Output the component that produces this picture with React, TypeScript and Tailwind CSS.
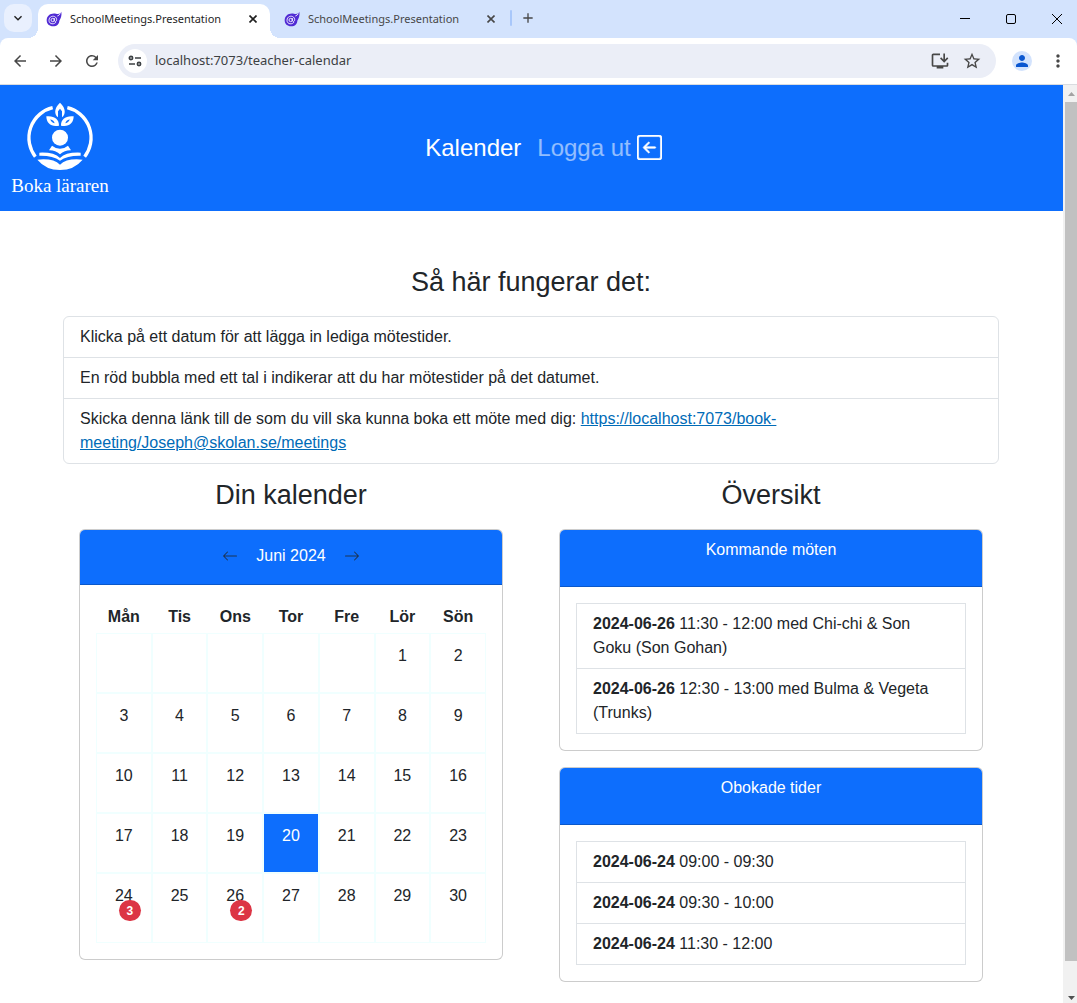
import React from "react";
import {
  MdArrowBack,
  MdArrowForward,
  MdRefresh,
  MdOutlineInstallDesktop,
  MdStarBorder,
  MdPerson,
  MdMoreVert,
  MdKeyboardArrowDown,
  MdAdd,
} from "react-icons/md";
import { BsArrowLeft, BsArrowRight, BsArrowLeftSquare } from "react-icons/bs";

const weekdays = ["Mån", "Tis", "Ons", "Tor", "Fre", "Lör", "Sön"];

const weeks: (number | null)[][] = [
  [null, null, null, null, null, 1, 2],
  [3, 4, 5, 6, 7, 8, 9],
  [10, 11, 12, 13, 14, 15, 16],
  [17, 18, 19, 20, 21, 22, 23],
  [24, 25, 26, 27, 28, 29, 30],
];

const today = 20;
const meetingCounts: Record<number, number> = { 24: 3, 26: 2 };

const upcoming = [
  { date: "2024-06-26", text: "11:30 - 12:00 med Chi-chi & Son Goku (Son Gohan)" },
  { date: "2024-06-26", text: "12:30 - 13:00 med Bulma & Vegeta (Trunks)" },
];

const unbooked = [
  { date: "2024-06-24", text: "09:00 - 09:30" },
  { date: "2024-06-24", text: "09:30 - 10:00" },
  { date: "2024-06-24", text: "11:30 - 12:00" },
];

function BlazorIcon() {
  return (
    <svg viewBox="0 0 48 48" className="mb-1 size-4 shrink-0" aria-hidden="true">
      <path
        d="M46 2C44 8 38 10 30 8C14 5 2 14 2 28C2 39 10 46 21 46C33 46 40 38 40 29C44 23 48 13 46 2Z"
        fill="#512bd4"
      />
      <path
        d="M30 33C26 41 9 41 9 28C9 12 32 12 32 26C32 33 25 33 25 28V21M25 27A5 5 0 1 1 15 27A5 5 0 1 1 25 27M34 15C38 14 41 11 43 8"
        fill="none"
        stroke="#fff"
        strokeWidth="2.6"
      />
    </svg>
  );
}

function SiteInfoIcon() {
  return (
    <svg viewBox="0 0 14 12" className="h-3 w-3.5" fill="none" stroke="#3c4043" strokeWidth="1.7" aria-hidden="true">
      <circle cx="3" cy="3" r="1.6" />
      <path d="M7 3H13M1 9H7" />
      <circle cx="11" cy="9" r="1.6" />
    </svg>
  );
}

function Tab({ active }: { active?: boolean }) {
  return (
    <div
      className={
        active
          ? "relative flex h-[34px] w-58 shrink items-center rounded-t-[10px] bg-white pr-2.5 pl-2 text-[#1f1f1f]"
          : "flex h-[34px] w-58 shrink items-center pr-1 pl-3.5 text-[#474747]"
      }
    >
      {active && (
        <>
          <span className="absolute bottom-0 -left-2.5 size-2.5 bg-[radial-gradient(circle_at_0_0,transparent_10px,white_10px)]" />
          <span className="absolute -right-2.5 bottom-0 size-2.5 bg-[radial-gradient(circle_at_100%_0,transparent_10px,white_10px)]" />
        </>
      )}
      <BlazorIcon />
      <span className="ml-2 flex-1 truncate pb-1 text-[11px] leading-4">SchoolMeetings.Presentation</span>
      <button type="button" aria-label="Stäng flik" className="mb-1 grid size-3.5 place-items-center">
        <svg viewBox="0 0 8 8" className="size-2" stroke="currentColor" strokeWidth="1.6" fill="none">
          <path d="M.5 .5L7.5 7.5M7.5 .5L.5 7.5" />
        </svg>
      </button>
    </div>
  );
}

function BrowserChrome() {
  return (
    <div className="font-['Noto_Sans','Open_Sans',sans-serif]">
      <div className="flex h-[38px] items-end bg-[#d3e3fd]">
        <button
          type="button"
          aria-label="Sök bland flikar"
          className="mb-1.5 ml-1 grid size-7 shrink-0 place-items-center rounded-[10px] bg-[#e9f0fe] text-[#1f1f1f]"
        >
          <MdKeyboardArrowDown className="size-4" stroke="currentColor" />
        </button>
        <div className="ml-1.5 flex min-w-0">
          <Tab active />
          <Tab />
        </div>
        <span className="mb-3 ml-2 h-4 w-0.5 rounded bg-[#a8c7fa]" />
        <button type="button" aria-label="Ny flik" className="mb-3 ml-2 text-[#474747]">
          <MdAdd className="size-4" />
        </button>
        <div className="ml-auto flex h-full text-black">
          <button type="button" aria-label="Minimera" className="grid w-11.5 place-items-center">
            <svg viewBox="0 0 10 10" className="size-2.5" stroke="currentColor" fill="none"><path d="M0 4.5H10" /></svg>
          </button>
          <button type="button" aria-label="Maximera" className="grid w-11.5 place-items-center">
            <svg viewBox="0 0 10 10" className="size-2.5" stroke="currentColor" fill="none">
              <rect x=".5" y=".5" width="9" height="9" rx="1.5" />
            </svg>
          </button>
          <button type="button" aria-label="Stäng" className="grid w-[43px] place-items-center pl-[3px]">
            <svg viewBox="0 0 10 10" className="size-2.5" stroke="currentColor" fill="none"><path d="M0 0L10 10M10 0L0 10" /></svg>
          </button>
        </div>
      </div>
      <div className="bg-[#d3e3fd]">
        <div className="flex h-[47px] items-center rounded-t-lg border-b border-[#d9dce0] bg-white pl-[11px] text-[#474747]">
          <button type="button" aria-label="Tillbaka" className="mr-4.5"><MdArrowBack className="size-[18px]" /></button>
          <button type="button" aria-label="Framåt" className="mr-4.5"><MdArrowForward className="size-[18px]" /></button>
          <button type="button" aria-label="Läs in igen" className="mr-[17px]"><MdRefresh className="size-[18px]" /></button>
          <div className="flex h-[34px] flex-1 items-center rounded-full bg-[#ebeef7] pr-3.5 pl-[5px]">
            <button
              type="button"
              aria-label="Visa webbplatsinformation"
              className="grid size-6 place-items-center rounded-full bg-white"
            >
              <SiteInfoIcon />
            </button>
            <input
              type="text"
              aria-label="Adress"
              readOnly
              value="localhost:7073/teacher-calendar"
              className="ml-2 min-w-0 flex-1 bg-transparent text-[13px] text-[#3c4043] outline-none"
            />
            <button type="button" aria-label="Installera" className="mr-3"><MdOutlineInstallDesktop className="size-5" /></button>
            <button type="button" aria-label="Bokmärk"><MdStarBorder className="size-5" /></button>
          </div>
          <button
            type="button"
            aria-label="Profil"
            className="ml-4 grid size-5 place-items-center rounded-full bg-[#d3e3fd] text-[#0b57d0]"
          >
            <MdPerson className="size-[18px]" />
          </button>
          <button type="button" aria-label="Meny" className="mr-[9px] ml-4"><MdMoreVert className="size-5" /></button>
        </div>
      </div>
    </div>
  );
}

function Logo() {
  return (
    <a href="#hem" className="flex w-30 shrink-0 flex-col items-center text-white">
      <svg viewBox="75 33 210 213" className="mb-0.5 h-[71px] w-[70px]" fill="#fff" aria-hidden="true">
        <path
          d="M158 53A93 93 0 0 0 106 200M202 53A93 93 0 0 1 254 200"
          fill="none"
          stroke="#fff"
          strokeWidth="10"
        />
        <path d="M180 38C199 55 197 74 186 82V64L180 56L174 64V82C163 74 161 55 180 38Z" />
        <path
          fillRule="evenodd"
          d="M139 79C162 76 178 88 177 107C154 112 139 100 139 79ZM151 88Q153 97 164 100Q162 91 151 88Z"
        />
        <path
          fillRule="evenodd"
          d="M221 79C198 76 182 88 183 107C206 112 221 100 221 79ZM209 88Q207 97 196 100Q198 91 209 88Z"
        />
        <circle cx="180" cy="143" r="24" />
        <path d="M156 167Q180 186 204 167L213 181Q195 180 180 193Q165 180 147 181Z" />
        <path d="M118 188Q162 186 180 204Q198 186 242 188V197Q202 196 180 212Q158 196 118 197Z" />
        <path d="M112 209Q160 204 180 224Q200 204 248 209Q222 240 180 240Q138 240 112 209Z" />
      </svg>
      <span className="font-['Liberation_Serif',serif] text-[19px] leading-6">Boka läraren</span>
    </a>
  );
}

function Calendar() {
  return (
    <section className="overflow-hidden rounded-md border border-black/20 bg-white">
      <div className="flex h-[55px] items-center justify-center gap-4.5 border-b border-black/20 bg-[#0d6efd] pb-0.5 text-white">
        <button type="button" aria-label="Föregående månad" className="text-[#212529]/80">
          <BsArrowLeft className="size-4" />
        </button>
        <span>Juni 2024</span>
        <button type="button" aria-label="Nästa månad" className="text-[#212529]/80">
          <BsArrowRight className="size-4" />
        </button>
      </div>
      <div className="p-4">
        <table className="w-full table-fixed border-separate border-spacing-0 text-center">
          <thead>
            <tr>
              {weekdays.map((d) => (
                <th key={d} scope="col" className="h-8 p-0 font-bold">{d}</th>
              ))}
            </tr>
          </thead>
          <tbody>
            {weeks.map((week, w) => (
              <tr key={w}>
                {week.map((day, i) => (
                  <td key={i} className="border border-[#f0ffff] p-0 align-top">
                    {day !== null && (
                      <button
                        type="button"
                        className={
                          day === today
                            ? "flex h-[58px] w-full justify-center bg-[#0d6efd] pt-2.5 text-white"
                            : w === 4
                              ? "flex h-[68px] w-full justify-center pt-2.5"
                              : "flex h-[58px] w-full justify-center pt-2.5"
                        }
                      >
                        <span className="relative">
                          {day}
                          {meetingCounts[day] && (
                            <span className="absolute top-4 left-1 grid h-[21px] w-[22px] place-items-center rounded-full bg-[#dc3545] text-[12px] leading-3 font-bold text-white">
                              {meetingCounts[day]}
                            </span>
                          )}
                        </span>
                      </button>
                    )}
                  </td>
                ))}
              </tr>
            ))}
          </tbody>
        </table>
      </div>
    </section>
  );
}

function MeetingCard({ title, items }: { title: string; items: { date: string; text: string }[] }) {
  return (
    <section className="mb-4 overflow-hidden rounded-md border border-black/20 bg-white">
      <h3 className="border-b border-black/20 bg-[#0d6efd] pt-2 pb-6 text-center text-white">{title}</h3>
      <div className="p-4">
        <ul className="divide-y divide-[#dee2e6] border border-[#dee2e6]">
          {items.map((m) => (
            <li key={m.text} className="px-4 py-2">
              <b className="font-bold">{m.date}</b> {m.text}
            </li>
          ))}
        </ul>
      </div>
    </section>
  );
}

function Scrollbar() {
  return (
    <div className="flex w-3.5 shrink-0 flex-col bg-[#f1f1f1]" aria-hidden="true">
      <div className="flex h-[17px] items-center justify-end pr-0.5">
        <svg viewBox="0 0 7 4" className="h-1 w-[7px]" fill="#a3a3a3"><path d="M0 4L3.5 0L7 4Z" /></svg>
      </div>
      <div className="ml-0.5 flex-1 bg-[#c1c1c1]" />
      <div className="flex h-[42px] items-end justify-end pr-0.5 pb-[3px]">
        <svg viewBox="0 0 7 4" className="h-1 w-[7px]" fill="#505050"><path d="M0 0L3.5 4L7 0Z" /></svg>
      </div>
    </div>
  );
}

export default function App() {
  return (
    <div className="flex min-h-screen flex-col bg-white">
      <BrowserChrome />
      <div className="flex flex-1">
        <div className="min-w-0 flex-1 font-['Liberation_Sans',Arial,sans-serif] text-[16px] leading-6 text-[#212529]">
          <header className="flex items-center bg-[#0d6efd] pt-4 pb-[13px]">
            <Logo />
            <nav className="flex flex-1 items-center justify-center gap-4 pr-24 pb-1 text-[24px] leading-9">
              <a href="#kalender" className="text-white">Kalender</a>
              <a href="#logga-ut" className="flex items-center gap-1.5 text-white/55">
                Logga ut
                <BsArrowLeftSquare className="size-[25px] text-white" strokeWidth={0.4} />
              </a>
            </nav>
          </header>
          <div className="pr-px">
            <main className="mx-auto max-w-[960px] px-3 pt-[55px]">
              <h1 className="mb-[18px] text-center text-[27px] leading-8">Så här fungerar det:</h1>
              <ul className="divide-y divide-[#dee2e6] rounded-md border border-[#dee2e6]">
                <li className="px-4 py-2">Klicka på ett datum för att lägga in lediga mötestider.</li>
                <li className="px-4 py-2">En röd bubbla med ett tal i indikerar att du har mötestider på det datumet.</li>
                <li className="px-4 py-2">
                  Skicka denna länk till de som du vill ska kunna boka ett möte med dig:{" "}
                  <a href="https://localhost:7073/book-meeting/Joseph@skolan.se/meetings" className="text-[#006bb7] underline">
                    https://localhost:7073/book-meeting/Joseph@skolan.se/meetings
                  </a>
                </li>
              </ul>
              <div className="grid grid-cols-2 gap-6">
                <div className="px-4 pt-[15px]">
                  <h2 className="mb-[18px] text-center text-[27px] leading-8">Din kalender</h2>
                  <Calendar />
                </div>
                <div className="px-4 pt-[15px]">
                  <h2 className="mb-[18px] text-center text-[27px] leading-8">Översikt</h2>
                  <MeetingCard title="Kommande möten" items={upcoming} />
                  <MeetingCard title="Obokade tider" items={unbooked} />
                </div>
              </div>
            </main>
          </div>
        </div>
        <Scrollbar />
      </div>
    </div>
  );
}
